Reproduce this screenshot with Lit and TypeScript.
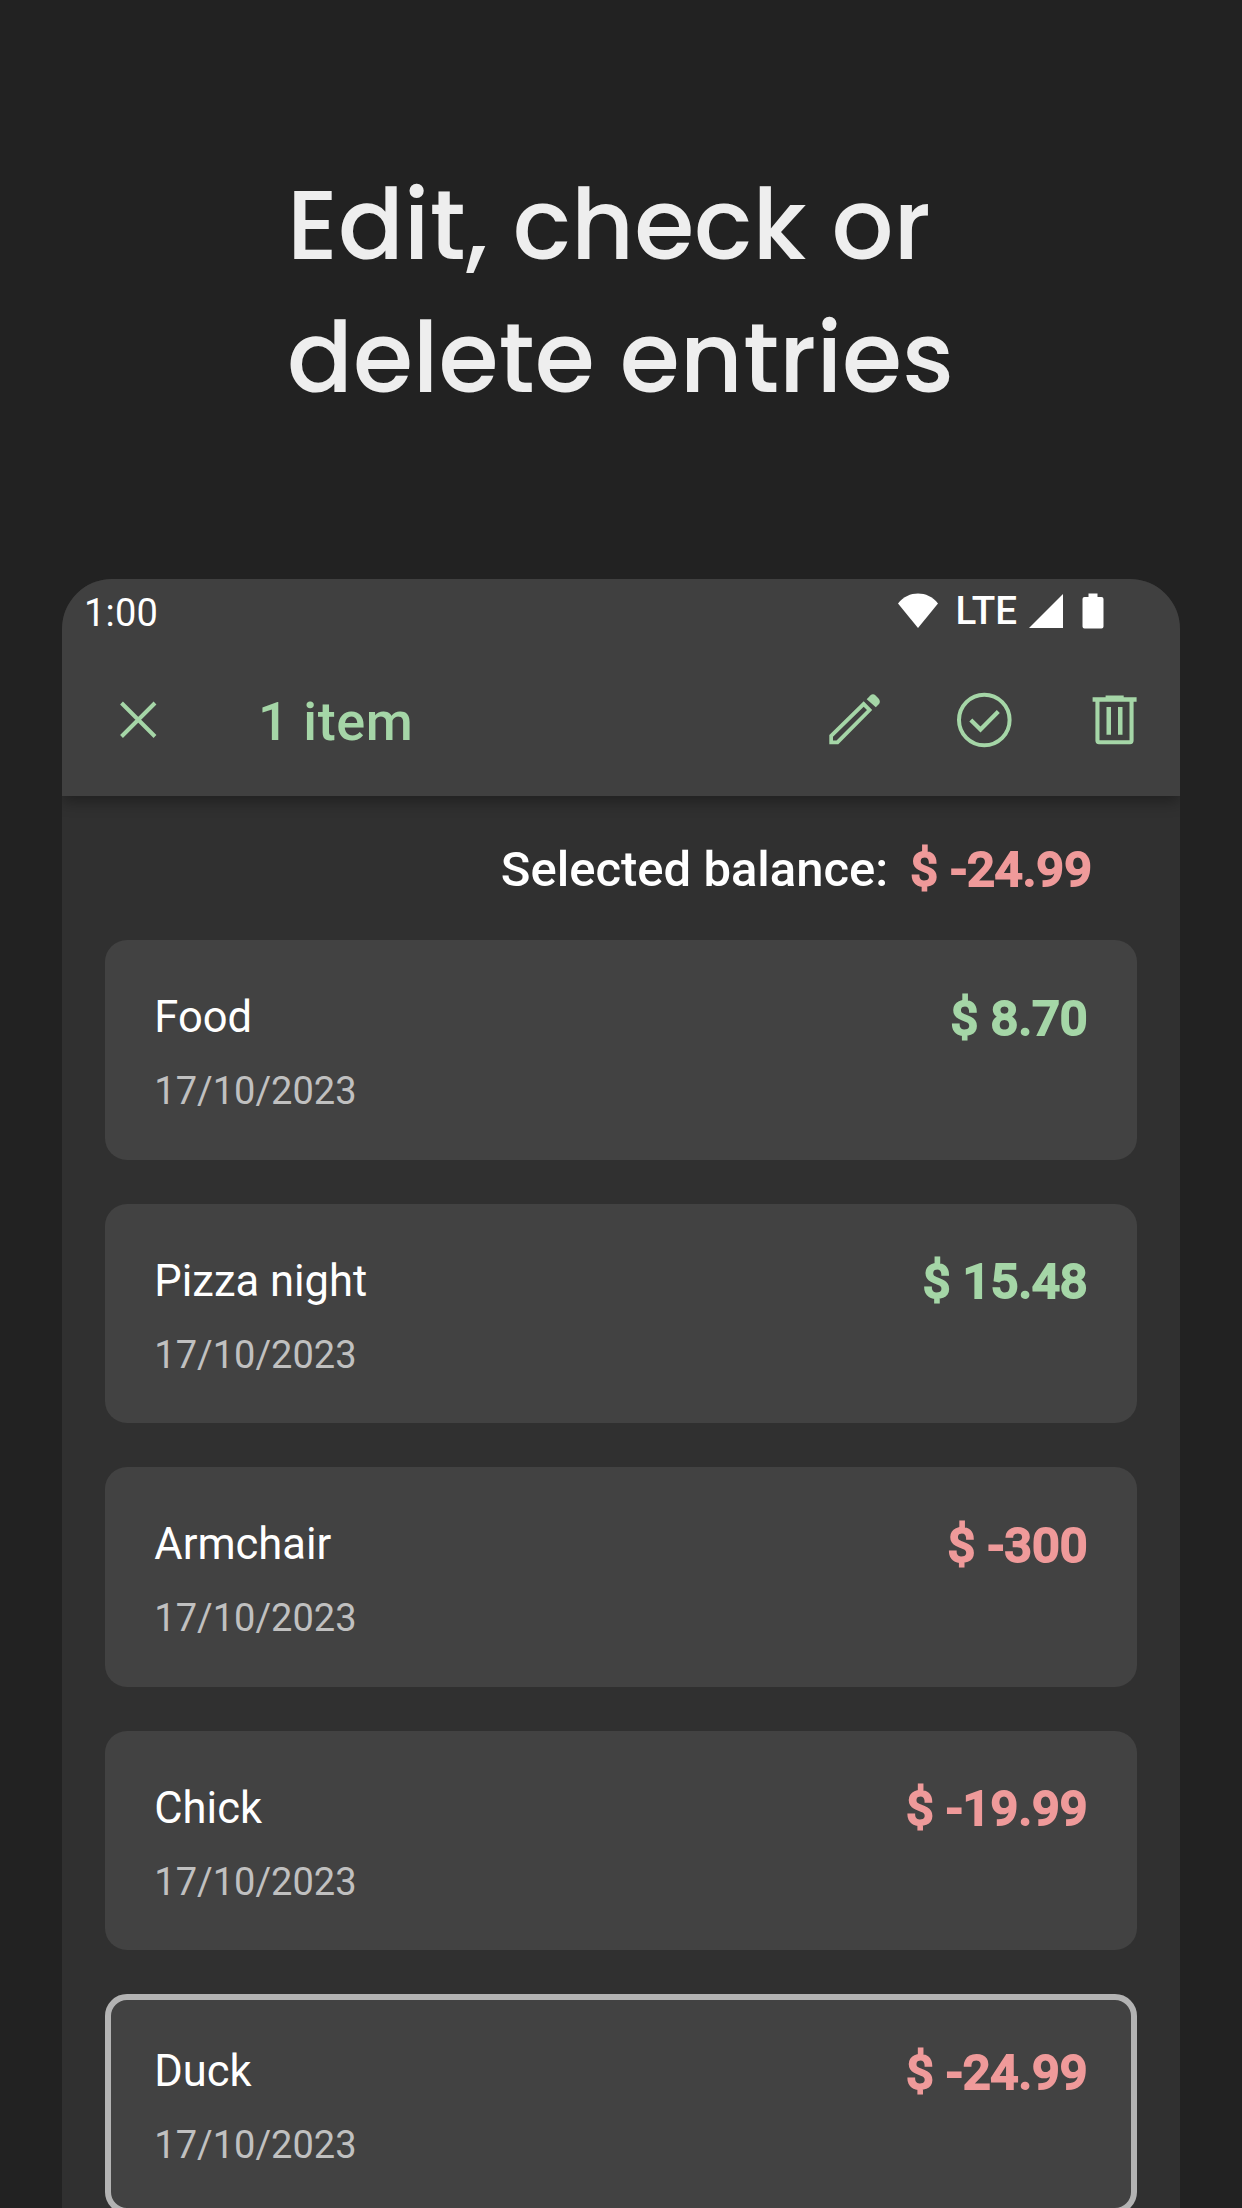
import { LitElement, html, css } from "lit";
import { customElement, property } from "lit/decorators.js";
import { classMap } from "lit/directives/class-map.js";

interface Entry {
  name: string;
  date: string;
  amount: string;
  negative: boolean;
  selected?: boolean;
}

const ENTRIES: Entry[] = [
  { name: "Food", date: "17/10/2023", amount: "$ 8.70", negative: false },
  { name: "Pizza night", date: "17/10/2023", amount: "$ 15.48", negative: false },
  { name: "Armchair", date: "17/10/2023", amount: "$ -300", negative: true },
  { name: "Chick", date: "17/10/2023", amount: "$ -19.99", negative: true },
  { name: "Duck", date: "17/10/2023", amount: "$ -24.99", negative: true, selected: true },
];

@customElement("entry-card")
class EntryCard extends LitElement {
  @property({ attribute: false }) entry!: Entry;

  static styles = css`
    :host {
      display: block;
    }
    .card {
      box-sizing: border-box;
      height: 219.7px;
      border: 6px solid transparent;
      border-radius: 22px;
      background: #424242 border-box;
      padding: 46px 43px 0 43px;
      display: flex;
      justify-content: space-between;
      align-items: flex-start;
    }
    .card.selected {
      border-color: #b3b3b3;
    }
    .name {
      font-size: 43.5px;
      line-height: 52px;
      color: #fff;
    }
    .date {
      margin-top: 24px;
      font-size: 38px;
      line-height: 46px;
      color: #c0c0c0;
    }
    .amount {
      margin-top: -1.5px;
      font-size: 49px;
      line-height: 56px;
      font-weight: 500;
      -webkit-text-stroke: 1.9px currentColor;
      color: #a5d6a7;
    }
    .amount.negative {
      color: #ef9a9a;
    }
  `;

  render() {
    const e = this.entry;
    return html`
      <div class=${classMap({ card: true, selected: !!e.selected })}>
        <div>
          <div class="name">${e.name}</div>
          <div class="date">${e.date}</div>
        </div>
        <div class=${classMap({ amount: true, negative: e.negative })}>${e.amount}</div>
      </div>
    `;
  }
}

@customElement("app-root")
class AppRoot extends LitElement {
  static styles = css`
    :host {
      display: block;
      height: 2208px;
      overflow: hidden;
      background: #222;
      font-family: Roboto, "Liberation Sans", sans-serif;
    }
    .page {
      display: flex;
      flex-direction: column;
      height: 2208px;
    }
    .headline {
      box-sizing: border-box;
      height: 579px;
      flex: none;
      margin: 0;
      padding: 159px 0 0 287px;
      font-family: Poppins, Inter, sans-serif;
      font-weight: 500;
      font-size: 97.2px;
      line-height: 133px;
      color: #eee;
      white-space: nowrap;
    }
    .line {
      display: block;
    }
    .phone {
      flex: none;
      margin: 0 62px;
      height: 1629px;
      border-radius: 50px 50px 0 0;
      overflow: hidden;
      background: #303030;
    }
    .top {
      background: #404040;
      box-shadow: 0 6px 14px rgba(0, 0, 0, 0.32);
    }
    .status {
      height: 66px;
      display: flex;
      align-items: center;
      justify-content: space-between;
      padding: 0 76px 0 22px;
      color: #fff;
      font-size: 38px;
      line-height: 44px;
    }
    .time {
      padding-top: 2px;
      letter-spacing: 0.2px;
    }
    .signals {
      display: flex;
      align-items: center;
      padding-bottom: 2px;
    }
    .signals svg,
    .actions svg,
    .close {
      display: block;
      flex: none;
    }
    .lte {
      font-size: 38.6px;
      font-weight: 500;
      margin: 0 12px 0 16.3px;
    }
    .signal {
      margin-right: 19px;
    }
    .toolbar {
      box-sizing: border-box;
      height: 151px;
      display: flex;
      align-items: flex-start;
      padding: 42px 33px 0 43px;
      color: #a5d6a7;
    }
    .title {
      flex: 1;
      margin-left: 87px;
      font-size: 54px;
      line-height: 69px;
      font-weight: 500;
      letter-spacing: 0.6px;
    }
    .actions {
      display: flex;
      gap: 64px;
    }
    .balance {
      box-sizing: border-box;
      height: 144px;
      display: flex;
      align-items: center;
      justify-content: flex-end;
      padding: 3px 88px 0 0;
      color: #fff;
      font-size: 49px;
      line-height: 56px;
      font-weight: 500;
    }
    .total {
      margin-left: 22px;
      -webkit-text-stroke: 1.9px currentColor;
      color: #ef9a9a;
    }
    .entries {
      display: flex;
      flex-direction: column;
      gap: 43.9px;
      padding: 0 43.3px;
    }
  `;

  render() {
    return html`
      <div class="page">
        <h1 class="headline">
          <span class="line">Edit, check or</span>
          <span class="line">delete entries</span>
        </h1>
        <div class="phone">
          <div class="top">
            <div class="status">
              <span class="time">1:00</span>
              <div class="signals">
                <svg width="42" height="36" viewBox="0 0 42 36">
                  <path fill="#fff" d="M1 10.500C6.500 3.500 13.500 .5 21 .5s14.500 3 20 10L21 35z" />
                </svg>
                <span class="lte">LTE</span>
                <svg class="signal" width="34" height="36" viewBox="0 0 34 36">
                  <path fill="#fff" d="M0 35L34 1V35z" />
                </svg>
                <svg width="22" height="36" viewBox="0 0 22 36">
                  <path
                    fill="#fff"
                    d="M6.500 0.500H15.500V4H19.500Q21.500 4 21.500 6V33.500Q21.500 35.500 19.500 35.500H2.500Q.5 35.500 .5 33.500V6Q.5 4 2.500 4H6.500z"
                  />
                </svg>
              </div>
            </div>
            <div class="toolbar">
              <svg class="close" width="66" height="66" viewBox="0 0 66 66">
                <path
                  d="M16.500 16L50 49.500M50 16L16.500 49.500"
                  fill="none"
                  stroke="currentColor"
                  stroke-width="4"
                />
              </svg>
              <div class="title">1 item</div>
              <div class="actions">
                <svg width="66" height="66" viewBox="0 0 66 66">
                  <path
                    fill="currentColor"
                    fill-rule="evenodd"
                    d="M8.300 57.200V48L42.700 14.200L51.200 23L17.300 57.200zM12 53.400H15.500L46 23L42.700 19.700L12 49.700z"
                  />
                  <path
                    fill="currentColor"
                    d="M45.700 12.200L49.300 8.500Q52 6 54.600 8.500L57.300 11.200Q60 14.500 58 17L54.800 20.300z"
                  />
                </svg>
                <svg width="66" height="66" viewBox="0 0 66 66" fill="none" stroke="currentColor">
                  <circle cx="33.300" cy="33" r="25.300" stroke-width="4" />
                  <path d="M19.800 33L29.500 42.500L47.300 24.500" stroke-width="4.200" />
                </svg>
                <svg width="66" height="66" viewBox="0 0 66 66">
                  <path
                    fill="currentColor"
                    fill-rule="evenodd"
                    d="M11.600 10.300H24.600V8.400H42.700V10.300H55.600V14.700H52.600V53.500Q52.600 57.200 49 57.200H18Q14.400 57.200 14.400 53.500V14.700H11.600zM18.500 14.700V53.200H48.500V14.700zM25.500 20H30V47.700H25.500zM37 20H41.500V47.700H37z"
                  />
                </svg>
              </div>
            </div>
          </div>
          <div class="balance">
            <span>Selected balance:</span>
            <span class="total">$ -24.99</span>
          </div>
          <div class="entries">
            ${ENTRIES.map((entry) => html`<entry-card .entry=${entry}></entry-card>`)}
          </div>
        </div>
      </div>
    `;
  }
}
